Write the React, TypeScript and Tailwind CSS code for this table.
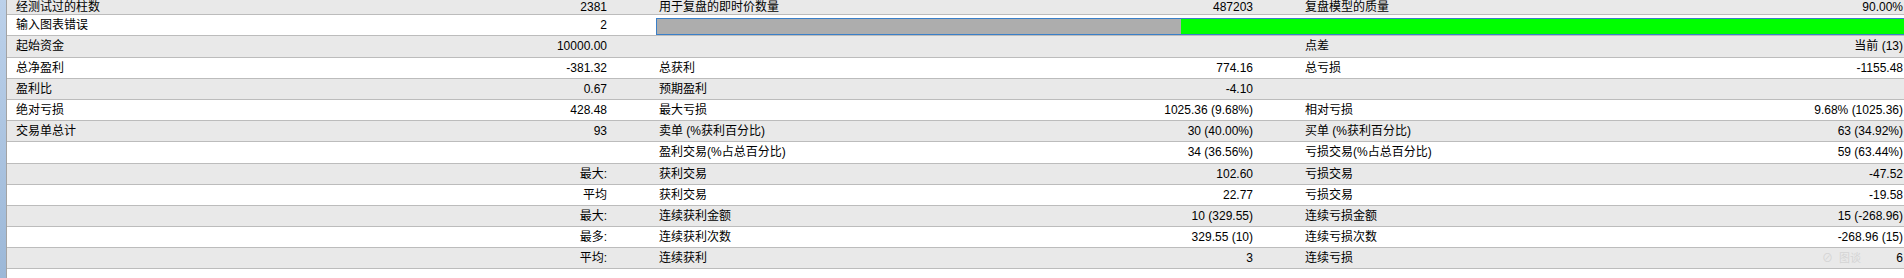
import React from "react";

type Cell = { label?: string; value?: string; right?: string };
type Row = [Cell, Cell | null, Cell | null];

const rows: Row[] = [
  [{ label: "经测试过的柱数", value: "2381" }, { label: "用于复盘的即时价数量", value: "487203" }, { label: "复盘模型的质量", value: "90.00%" }],
  [{ label: "输入图表错误", value: "2" }, null, null],
  [{ label: "起始资金", value: "10000.00" }, {}, { label: "点差", value: "当前 (13)" }],
  [{ label: "总净盈利", value: "-381.32" }, { label: "总获利", value: "774.16" }, { label: "总亏损", value: "-1155.48" }],
  [{ label: "盈利比", value: "0.67" }, { label: "预期盈利", value: "-4.10" }, {}],
  [{ label: "绝对亏损", value: "428.48" }, { label: "最大亏损", value: "1025.36 (9.68%)" }, { label: "相对亏损", value: "9.68% (1025.36)" }],
  [{ label: "交易单总计", value: "93" }, { label: "卖单 (%获利百分比)", value: "30 (40.00%)" }, { label: "买单 (%获利百分比)", value: "63 (34.92%)" }],
  [{}, { label: "盈利交易(%占总百分比)", value: "34 (36.56%)" }, { label: "亏损交易(%占总百分比)", value: "59 (63.44%)" }],
  [{ value: "最大:" }, { label: "获利交易", value: "102.60" }, { label: "亏损交易", value: "-47.52" }],
  [{ value: "平均" }, { label: "获利交易", value: "22.77" }, { label: "亏损交易", value: "-19.58" }],
  [{ value: "最大:" }, { label: "连续获利金额", value: "10 (329.55)" }, { label: "连续亏损金额", value: "15 (-268.96)" }],
  [{ value: "最多:" }, { label: "连续获利次数", value: "329.55 (10)" }, { label: "连续亏损次数", value: "-268.96 (15)" }],
  [{ value: "平均:" }, { label: "连续获利", value: "3" }, { label: "连续亏损", value: "6" }],
];

function Group({ cell, width }: { cell: Cell; width: string }) {
  return (
    <div className={`flex shrink-0 items-center justify-between pl-[9px] pr-[43px] ${width}`}>
      <span>{cell.label}</span>
      <span>{cell.value}</span>
    </div>
  );
}

export default function App() {
  return (
    <div
      className="relative flex h-[278px] w-[1904px] overflow-hidden bg-white text-[12px] leading-none text-black"
      style={{ fontFamily: '"Liberation Sans", "Noto Sans CJK SC", sans-serif' }}
    >
      {/* left gutter */}
      <div className="w-[6px] shrink-0 bg-gradient-to-b from-[#bcd1ea] to-[#9cb8d8]" />
      <div className="w-px shrink-0 bg-[#a3a3a3]" />

      <div className="flex min-w-0 flex-1 flex-col">
        {rows.map((r, i) => (
          <div
            key={i}
            className={`flex shrink-0 border-b border-[#bcbcbc] ${i === 0 ? "h-[15.2px]" : "h-[21.2px]"} ${
              i % 2 === 0 ? "bg-[#e9e9e9]" : "bg-white"
            }`}
          >
            <Group cell={r[0]} width="w-[643px]" />
            {r[1] === null ? (
              <div className="flex flex-1 pl-[6px] pt-[3px]">
                <div className="flex h-[17px] flex-1 border border-r-0 border-[#3a7fc8]">
                  <div className="w-[524px] bg-[#adadad]" />
                  <div className="flex-1 bg-[#00ff00]" />
                </div>
              </div>
            ) : (
              <>
                <Group cell={r[1]} width="w-[646px]" />
                <Group cell={r[2] as Cell} width="w-[650px]" />
              </>
            )}
          </div>
        ))}
      </div>

      {/* faint watermark */}
      <div className="absolute left-[1822px] top-[253px] flex items-center gap-[6px] text-[11px] text-[#d4d4d4]">
        <span>⊘</span>
        <span>图谈</span>
      </div>
    </div>
  );
}
